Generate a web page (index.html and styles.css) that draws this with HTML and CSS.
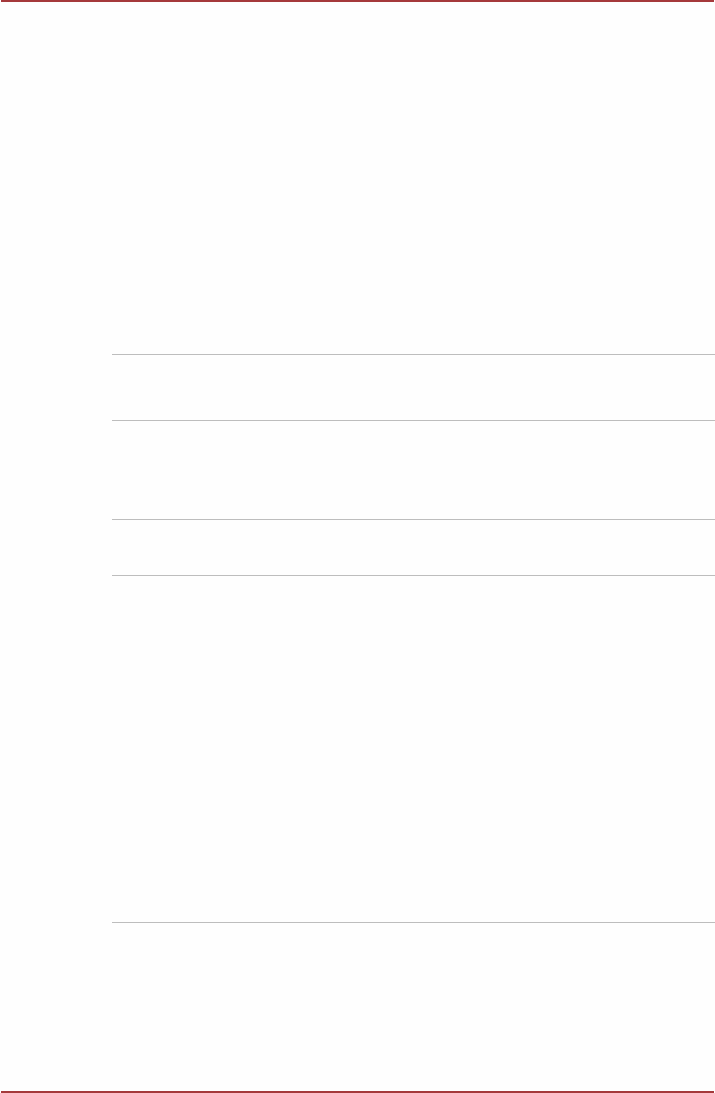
FILE: index.html
```html
<html>
    <head>
        <title>Page</title>
        <meta charset="utf-8">
        <link rel="stylesheet" href="styles.css">
    </head>
    <body>
        <div class="page">
            <div class="rule"></div>

            <div class="sheet">
                <div class="row row-a"></div>
                <div class="row row-b"></div>
                <div class="row row-c"></div>
                <div class="row row-d"></div>
                <div class="row row-end"></div>
            </div>

            <div class="rule rule-bottom"></div>
        </div>
    </body>
</html>
```

FILE: styles.css
```css
html,
body {
    margin: 0;
    width: 100%;
    height: 100%;
    background-color: #fefefe;
    font-family: "Liberation Sans", Arial, sans-serif;
}
.page {
    display: flex;
    flex-direction: column;
    height: 1093px;
}
.rule {
    height: 2px;
    margin: 0 1px;
    background-color: #a5393b;
}
.rule-bottom {
    margin-top: auto;
}
.sheet {
    margin-top: 352px;
    padding-left: 112px;
}
.row {
    box-sizing: border-box;
    border-top: solid 1px #bdbdbd;
}
.row-a {
    height: 66px;
}
.row-b {
    height: 99px;
}
.row-c {
    height: 56px;
}
.row-d {
    height: 347px;
}
.row-end {
    height: 1px;
}
```
